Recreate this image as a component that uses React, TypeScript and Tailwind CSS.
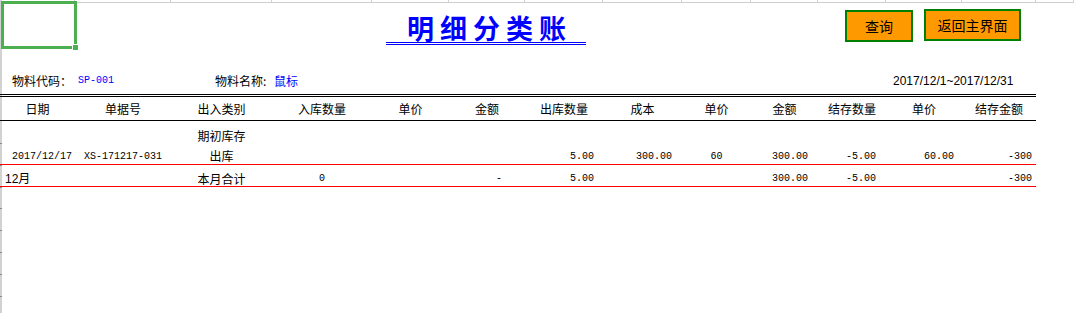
import React from 'react'

const GRID = 'grid grid-cols-[75px_96px_101px_100px_77px_76px_78px_79px_69px_67px_68px_76px_74px]'
const MONO = "font-['Liberation_Mono','Noto_Sans_CJK_SC',monospace] text-[10px] leading-[10px]"
const CJK = 'text-[12px] leading-[12px]'

const stripCols = [
  'w-[75px]', 'w-[96px]', 'w-[101px]', 'w-[100px]', 'w-[77px]', 'w-[76px]', 'w-[78px]',
  'w-[79px]', 'w-[69px]', 'w-[67px]', 'w-[68px]', 'w-[76px]', 'w-[74px]', 'flex-1',
]

const headers = ['日期', '单据号', '出入类别', '入库数量', '单价', '金额', '出库数量', '成本', '单价', '金额', '结存数量', '单价', '结存金额']

type Cell = [string, string] | null

const openingRow: Cell[] = [
  null, null, ['期初库存', `${CJK} text-center pb-[1px]`], null, null, null, null, null, null, null, null, null, null,
]

const outRow: Cell[] = [
  ['2017/12/17', `${MONO} text-right pr-[3px] pb-[2px]`],
  ['XS-171217-031', `${MONO} text-center pb-[2px]`],
  ['出库', `${CJK} text-center pb-[2px]`],
  null, null, null,
  ['5.00', `${MONO} text-right pr-[9px] pb-[2px]`],
  ['300.00', `${MONO} text-right pr-[10px] pb-[2px]`],
  ['60', `${MONO} text-center pb-[2px]`],
  ['300.00', `${MONO} text-right pr-[10px] pb-[2px]`],
  ['-5.00', `${MONO} text-right pr-[10px] pb-[2px]`],
  ['60.00', `${MONO} text-right pr-[8px] pb-[2px]`],
  ['-300', `${MONO} text-right pr-[4px] pb-[2px]`],
]

const totalRow: Cell[] = [
  ['12月', "font-['Liberation_Sans','Noto_Sans_CJK_SC',sans-serif] text-[12px] leading-[12px] pl-[5px] pb-[1px]"],
  null,
  ['本月合计', `${CJK} text-center pb-[1px]`],
  ['0', `${MONO} text-center pb-[2px]`],
  null,
  ['-', `${MONO} text-right pr-[23px] pb-[2px]`],
  ['5.00', `${MONO} text-right pr-[9px] pb-[2px]`],
  null, null,
  ['300.00', `${MONO} text-right pr-[10px] pb-[2px]`],
  ['-5.00', `${MONO} text-right pr-[10px] pb-[2px]`],
  null,
  ['-300', `${MONO} text-right pr-[4px] pb-[2px]`],
]

const rowTicks = [143, 165, 187, 208, 230, 252, 274, 296]

const Row = ({ cells, className }: { cells: Cell[], className: string }) => (
  <div className={`${GRID} items-end ${className}`}>
    {cells.map((cell, i) => (
      <div key={i} className={cell ? cell[1] : ''}>{cell ? cell[0] : ''}</div>
    ))}
  </div>
)

const App = () => {
  return (
    <div className="relative w-[1074px] h-[313px] overflow-hidden bg-white text-black font-['Noto_Sans_CJK_SC',sans-serif]">
      {/* sheet gridline at the left edge */}
      <div className="absolute left-0 top-0 h-full w-[2px] bg-[#d2d2d2]">
        {rowTicks.map((y) => (
          <div key={y} className="absolute left-0 w-[2px] h-[1px] bg-[#8a8a8a]" style={{ top: y }} />
        ))}
      </div>

      <div className="relative">
        {/* top row of sheet gridlines */}
        <div className="flex h-[3px] border-b border-[#cdcdcd]">
          {stripCols.map((w, i) => (
            <div key={i} className={`${w} h-full border-r border-[#d4d4d4]`} />
          ))}
        </div>

        {/* title + buttons */}
        <div className="flex h-[45px] w-[1036px] items-start">
          <div className="ml-[386px] mt-[11px] w-[200px] border-b-[3px] border-double border-[#0000ff] pl-[21px] text-[27px] leading-[28px] font-bold tracking-[6px] text-[#0000ff]">
            明细分类账
          </div>
          <div className="ml-[259px] flex gap-[11px] items-start">
            <button className="mt-[7px] flex h-[32px] w-[68px] items-center justify-center border-2 border-[#008000] bg-[#ff9900] text-[14px] leading-[14px]">
              查询
            </button>
            <button className="mt-[6px] flex h-[32px] w-[97px] items-center justify-center border-2 border-[#008000] bg-[#ff9900] text-[14px] leading-[14px]">
              返回主界面
            </button>
          </div>
        </div>

        {/* material info */}
        <div className="flex h-[46px] w-[1036px] pt-[27px] text-[12px] leading-[12px]">
          <span className="w-[78px] pl-[12px]">物料代码：</span>
          <span className={`w-[137px] text-[#0000ff] ${MONO} pt-[1px]`}>SP-001</span>
          <span className="w-[59px]">物料名称:</span>
          <span className="w-[619px] text-[#0000ff]">鼠标</span>
          <span className="font-['Liberation_Sans',sans-serif]">2017/12/1~2017/12/31</span>
        </div>

        {/* ledger table */}
        <div className="w-[1036px] border-t-[3px] border-double border-black">
          <div className={`${GRID} h-[24px] items-center border-b border-black pt-[1px]`}>
            {headers.map((h, i) => (
              <div key={i} className={`${CJK} text-center`}>{h}</div>
            ))}
          </div>
          <Row cells={openingRow} className="h-[22px]" />
          <Row cells={outRow} className="h-[22px] border-b border-b-[#ff0000]" />
          <Row cells={totalRow} className="h-[22px] border-b border-b-[#ff0000]" />
        </div>
      </div>

      {/* active cell selection */}
      <div className="absolute left-[1px] top-[1px] h-[48px] w-[76px] border-[3px] border-[#4caf50]" />
      <div className="absolute left-[72px] top-[44px] h-[7px] w-[7px] bg-white" />
      <div className="absolute left-[73px] top-[45px] h-[5px] w-[5px] bg-[#4caf50]" />
    </div>
  )
}

export default App
